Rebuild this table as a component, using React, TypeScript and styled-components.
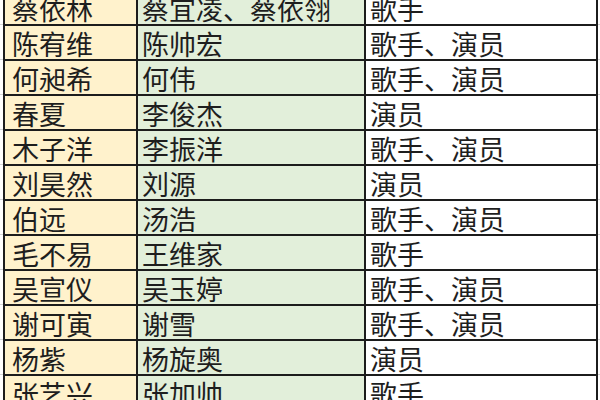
import { Fragment } from "react";
import styled, { createGlobalStyle } from "styled-components";

const GlobalStyle = createGlobalStyle`
  html, body {
    margin: 0;
    padding: 0;
    background: #ffffff;
    overflow: hidden;
  }
`;

const Sheet = styled.div`
  width: 600px;
  height: 400px;
  overflow: hidden;
`;

const GridArea = styled.div`
  margin-top: -11px;
  padding: 0 2px 0 3px;
  background: repeating-linear-gradient(
    to bottom,
    #d4d4d4 0px,
    #d4d4d4 1px,
    transparent 1px,
    transparent 35px
  );
`;

const Table = styled.div`
  display: grid;
  grid-template-columns: 131px 226px 230px;
  grid-auto-rows: 33px;
  gap: 2px;
  padding: 2px;
  background: #1c1c1c;
  font-family: "Noto Sans CJK SC", "Noto Sans", sans-serif;
  font-size: 27px;
  color: #1e1e1e;
`;

const Cell = styled.div<{ $tone: "name" | "real" | "job" }>`
  display: flex;
  align-items: center;
  padding-left: ${(p) => (p.$tone === "name" ? "7px" : "4px")};
  padding-top: 2px;
  line-height: 31px;
  white-space: nowrap;
  background: ${(p) =>
    p.$tone === "name" ? "#fff2cc" : p.$tone === "real" ? "#e2efda" : "#ffffff"};
`;

const rows: [string, string, string][] = [
  ["蔡依林", "蔡宜凌、蔡依翎", "歌手"],
  ["陈宥维", "陈帅宏", "歌手、演员"],
  ["何昶希", "何伟", "歌手、演员"],
  ["春夏", "李俊杰", "演员"],
  ["木子洋", "李振洋", "歌手、演员"],
  ["刘昊然", "刘源", "演员"],
  ["伯远", "汤浩", "歌手、演员"],
  ["毛不易", "王维家", "歌手"],
  ["吴宣仪", "吴玉婷", "歌手、演员"],
  ["谢可寅", "谢雪", "歌手、演员"],
  ["杨紫", "杨旋奥", "演员"],
  ["张艺兴", "张加帅", "歌手"],
];

export default function App() {
  return (
    <Sheet>
      <GlobalStyle />
      <GridArea>
        <Table>
          {rows.map(([name, real, job]) => (
            <Fragment key={name}>
              <Cell $tone="name">{name}</Cell>
              <Cell $tone="real">{real}</Cell>
              <Cell $tone="job">{job}</Cell>
            </Fragment>
          ))}
        </Table>
      </GridArea>
    </Sheet>
  );
}
